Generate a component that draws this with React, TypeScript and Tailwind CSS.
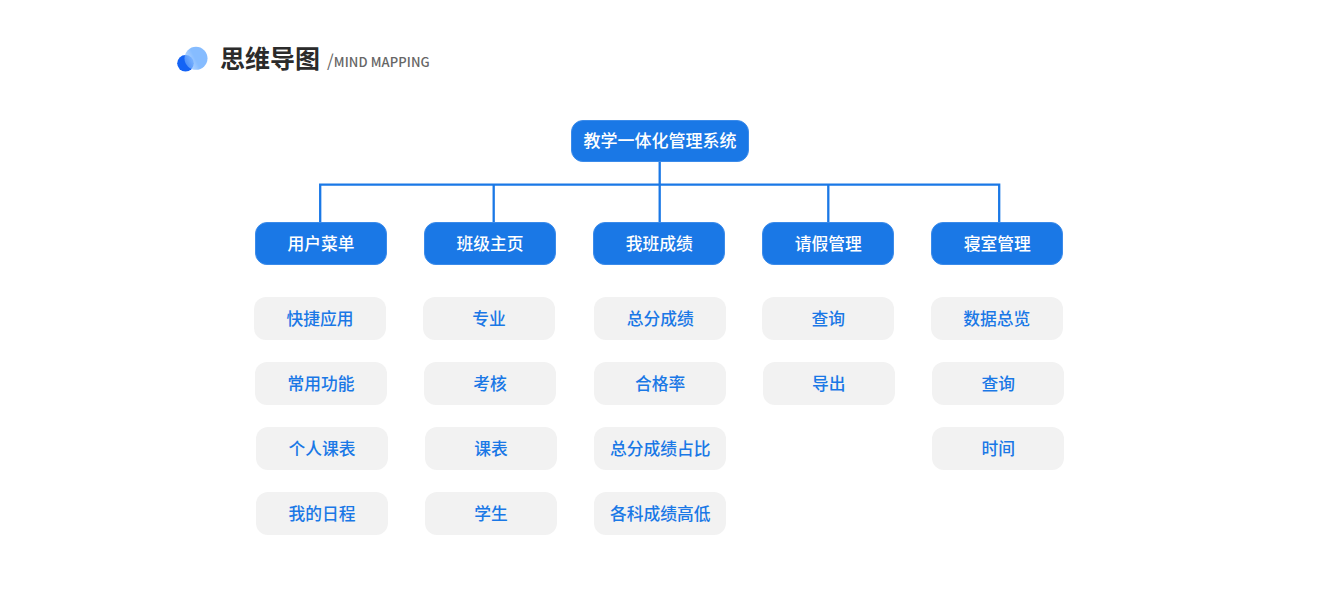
const columns = [
  {
    title: "用户菜单",
    items: [
      { label: "快捷应用", shift: "ml-[-1px]" },
      { label: "常用功能", shift: "ml-0" },
      { label: "个人课表", shift: "ml-[1px]" },
      { label: "我的日程", shift: "ml-[1px]" },
    ],
  },
  {
    title: "班级主页",
    items: [
      { label: "专业", shift: "ml-[-1px]" },
      { label: "考核", shift: "ml-0" },
      { label: "课表", shift: "ml-[1px]" },
      { label: "学生", shift: "ml-[1px]" },
    ],
  },
  {
    title: "我班成绩",
    items: [
      { label: "总分成绩", shift: "ml-[1px]" },
      { label: "合格率", shift: "ml-[1px]" },
      { label: "总分成绩占比", shift: "ml-[1px]" },
      { label: "各科成绩高低", shift: "ml-[1px]" },
    ],
  },
  {
    title: "请假管理",
    items: [
      { label: "查询", shift: "ml-0" },
      { label: "导出", shift: "ml-[0.5px]" },
    ],
  },
  {
    title: "寝室管理",
    items: [
      { label: "数据总览", shift: "ml-[-0.5px]" },
      { label: "查询", shift: "ml-[1px]" },
      { label: "时间", shift: "ml-[1px]" },
    ],
  },
];

function Logo() {
  return (
    <svg width="31" height="27" viewBox="0 0 31 27" className="shrink-0">
      <defs>
        <linearGradient id="overlap" gradientUnits="userSpaceOnUse" x1="8" y1="17" x2="18" y2="12">
          <stop offset="0" stopColor="#86bcff" stopOpacity="0.5" />
          <stop offset="1" stopColor="#86bcff" stopOpacity="1" />
        </linearGradient>
      </defs>
      <circle cx="8.5" cy="17.3" r="8.3" fill="#1463f5" />
      <circle cx="19" cy="12.3" r="11.5" fill="url(#overlap)" />
    </svg>
  );
}

// lines from the root node down to the five column heads
function Connectors() {
  return (
    <svg width="1320" height="60" viewBox="0 0 1320 60" className="block">
      <path
        d="M659.7 0V60M320.2 60V22.7H999.2V60M493.7 22.7V60M828.3 22.7V60"
        fill="none"
        stroke="#1a78e6"
        strokeWidth="2.3"
      />
    </svg>
  );
}

export default function App() {
  return (
    <div
      className="h-[600px] w-[1320px] overflow-hidden bg-white"
      style={{ fontFamily: '"Noto Sans CJK SC", "Noto Sans", sans-serif' }}
    >
      {/* Header */}
      <div className="flex h-[120px] items-start pl-[177px] pt-[46px]">
        <Logo />
        <h1 className="ml-[12px] mt-[-5px] text-[25px] font-bold leading-[32px] text-[#2b2b2b]">
          思维导图
        </h1>
        <span className="ml-[7px] mt-[1px] text-[13px] font-medium tracking-[0.1px] leading-[26px] text-[#666666]">
          <span className="text-[17px] font-normal">/</span>MIND MAPPING
        </span>
      </div>

      {/* Root */}
      <div className="flex justify-center">
        <div className="flex h-[42px] w-[178px] items-center justify-center rounded-[12px] border border-[#3b8bea] bg-[#1a78e6] pb-[2px] text-[17px] font-medium text-white">
          教学一体化管理系统
        </div>
      </div>

      <Connectors />

      {/* Columns */}
      <div className="ml-[255px] flex gap-[37.1px]">
        {columns.map((col) => (
          <div key={col.title} className="flex w-[132px] flex-col">
            <div className="flex h-[43px] items-center justify-center rounded-[12px] border border-[#3b8bea] bg-[#1a78e6] text-[16.75px] font-medium text-white">
              {col.title}
            </div>
            <div className="mt-[32px] flex flex-col gap-[22px]">
              {col.items.map((item) => (
                <div
                  key={item.label}
                  className={`flex h-[43px] w-[132px] items-center justify-center rounded-[12px] bg-[#f2f2f2] text-[16.75px] font-medium text-[#1a78e6] ${item.shift}`}
                >
                  {item.label}
                </div>
              ))}
            </div>
          </div>
        ))}
      </div>
    </div>
  );
}
